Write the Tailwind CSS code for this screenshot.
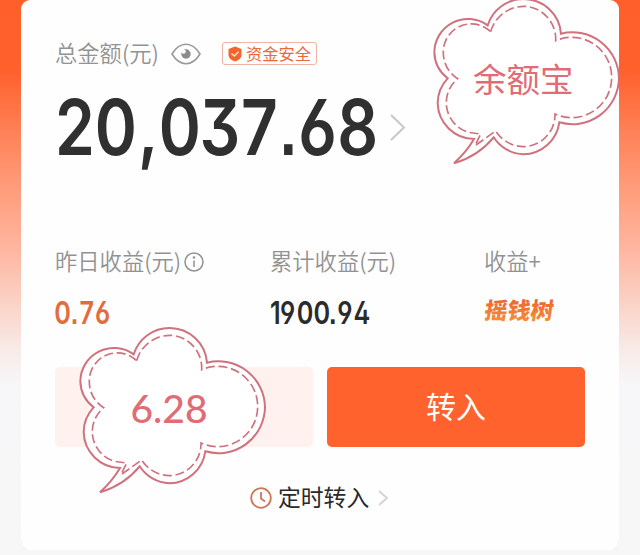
<!DOCTYPE html>
<html lang="zh-CN">
<head>
<meta charset="utf-8">
<title>余额宝</title>
<script src="https://cdn.jsdelivr.net/npm/@tailwindcss/browser@4"></script>
</head>
<body class="w-[640px] h-[555px] overflow-hidden relative bg-[#f7f7f7] font-['Noto_Sans_CJK_SC',sans-serif]">
<svg class="absolute w-0 h-0">
  <linearGradient id="gold" x1="0" y1="0" x2="0" y2="1"><stop offset=".2" stop-color="#ea6534"/><stop offset="1" stop-color="#f59838"/></linearGradient>
  <symbol id="cloud" viewBox="0 -9 600 510">
    <path d="M188 76A113 113 0 0 1 296 -3A113 113 0 0 1 408 101A140 140 0 0 1 582 235A140 140 0 0 1 403 367A111 111 0 0 1 295 463A111 111 0 0 1 206 412Q160 468 87 490Q125 455 147 417A110 110 0 0 1 38 310A110 110 0 0 1 68 235A101 101 0 0 1 28 157A101 101 0 0 1 188 76Z" fill="#fff" stroke="#d0717e" stroke-width="6"/>
    <path d="M197 95A104 104 0 0 1 300 19A98 98 0 0 1 392 122A120 120 0 0 1 560 232A120 120 0 0 1 390 342A96 96 0 0 1 295 440A100 100 0 0 1 212 393L150 437L167 402L130 397A93 93 0 0 1 64 305A93 93 0 0 1 98 236A90 90 0 0 1 55 160A84 84 0 0 1 197 95Z" fill="none" stroke="#d0717e" stroke-width="5" stroke-dasharray="27 11"/>
  </symbol>
</svg>
<div class="w-full h-full px-[21px] pb-[5px] bg-[linear-gradient(to_bottom,#ff5f2b_0px,#ff602c_70px,#ff8056_130px,#ff9b78_185px,#ffb6a0_250px,#fad6cb_310px,#f8ebe8_350px,#f7f6f8_385px,#f7f7f7_555px)]">
  <main class="h-full bg-[#fefefe] rounded-t-[9px] rounded-b-[12px] pl-[34px] pr-[33px] pt-[40px] flex flex-col">
    <div class="flex items-center h-[27px] text-[22.300px] leading-[27px] font-[350] text-[#929292]">
      <span class="w-[116px] whitespace-nowrap relative top-[-1px]">总金额(元)</span>
      <svg class="w-[30px] h-[22px]" viewBox="0 0 30 22" fill="none" stroke="#999" stroke-width="1.6"><path d="M1 11Q7 1.300 15 1.300T29 11Q23 20.700 15 20.700T1 11Z"/><circle cx="15" cy="11" r="4.700" fill="#8b8b8b" stroke="none"/><circle cx="12.600" cy="8.600" r="2.200" fill="#fefefe" stroke="none"/></svg>
      <span class="ml-[21px] w-[95px] h-[23px] border border-[#edb4a4] rounded-[3px] flex items-center pl-[5px] text-[16.300px] text-[#e9693d] font-normal whitespace-nowrap">
        <svg class="w-[14px] h-[16px] mr-[4px] shrink-0" viewBox="0 0 14 16"><path d="M7 .5L13.500 3V9Q13.500 13 7 15.500Q.5 13 .5 9V3Z" fill="#f5642f"/><path d="M3.500 7.500L6.300 10L10.500 5.800" fill="none" stroke="#ffe5ce" stroke-width="1.6"/></svg>资金安全</span>
    </div>
    <div class="flex h-[85px] mt-[19px]">
      <svg class="w-[328px] h-[85px] overflow-visible" viewBox="0 0 328 85"><text class="font-['Inter'] font-semibold text-[77px] [font-feature-settings:'ss01']" fill="#303030" transform="scale(.83 1)" x="0 48 100 125 174 224 271 293 340" y="69">20,037<tspan class="font-['Liberation_Sans'] font-bold text-[72px]">.</tspan>68</text></svg>
      <svg class="w-[18px] h-[28px] mt-[27px] ml-[5px]" viewBox="0 0 18 28" fill="none" stroke="#c8c8c8" stroke-width="2"><path d="M3 2L16 14.500L3 27"/></svg>
    </div>
    <div class="flex mt-[76px] text-[22.300px] leading-[27px] text-[#929292] font-[350] whitespace-nowrap">
      <section class="w-[215px]">
        <div class="flex items-center h-[27px]">昨日收益(元)<svg class="w-[20px] h-[20px] ml-[3px] mt-[3px]" viewBox="0 0 20 20" fill="none" stroke="#929292" stroke-width="1.500"><circle cx="10" cy="10" r="9"/><path d="M10 8.500V15"/><circle cx="10" cy="5.500" r=".6" fill="#929292"/></svg></div>
        <svg class="w-[90px] h-[40px] mt-[19px]" viewBox="0 0 90 40"><text class="font-['Inter'] font-semibold text-[31.500px] [font-feature-settings:'ss01']" fill="#e36c3e" transform="scale(.8 1)" x="-1 20 30.500 50" y="31">0<tspan class="font-['Liberation_Sans'] font-bold">.</tspan>76</text></svg>
      </section>
      <section class="w-[214px]">
        <div class="h-[27px]">累计收益(元)</div>
        <svg class="w-[120px] h-[40px] mt-[19px]" viewBox="0 0 120 40"><text class="font-['Inter'] font-semibold text-[31.500px] [font-feature-settings:'ss01']" fill="#2b2b2b" transform="scale(.8 1)" x="0 12.500 33.500 54.500 74 84 104.500" y="31">1900<tspan class="font-['Liberation_Sans'] font-bold">.</tspan>94</text></svg>
      </section>
      <section>
        <div class="h-[27px]">收益+</div>
        <svg class="w-[78px] h-[34px] mt-[20px] overflow-visible" viewBox="0 0 78 34"><text class="font-black text-[23px]" x="3" y="25" transform="skewX(-8)" fill="url(#gold)">摇钱树</text></svg>
      </section>
    </div>
    <div class="flex gap-[14px] h-[80px] mt-[34px]">
      <div class="w-[258px] h-[80px] rounded-[5px] bg-[#fff1ee]"></div>
      <button class="w-[258px] h-[80px] rounded-[5px] bg-[#ff622d] text-white text-[30px] pb-[4px]">转入</button>
    </div>
    <div class="flex items-center h-[30px] mt-[36px] ml-[195px] text-[22.800px] leading-[30px] text-[#292929]">
      <svg class="w-[22px] h-[22px] mr-[6px]" viewBox="0 0 22 22" fill="none" stroke="#cc7858" stroke-width="1.8"><circle cx="11" cy="11" r="9.800"/><path d="M11 5V11.500L15 14.500"/></svg><span class="relative top-[-1px]">定时转入</span>
      <svg class="w-[12px] h-[18px] ml-[8px]" viewBox="0 0 12 18" fill="none" stroke="#d2d2d2" stroke-width="1.8"><path d="M2 2L10 9L2 16"/></svg>
    </div>
  </main>
</div>
<div class="absolute left-[425px] top-[-3px] w-[200px] h-[170px] text-[#e06c76]">
  <svg class="absolute inset-0 w-full h-full"><use href="#cloud"/></svg>
  <span class="absolute left-[48px] top-[57px] text-[33.500px] leading-[48px] whitespace-nowrap">余额宝</span>
</div>
<div class="absolute left-[70.500px] top-[326px] w-[200px] h-[170px] text-[#e06c76]">
  <svg class="absolute inset-0 w-full h-full"><use href="#cloud"/></svg>
  <span class="absolute left-[60px] top-[58px] text-[39px] leading-[48px] font-['Lato'] font-medium whitespace-nowrap">6.28</span>
</div>
</body>
</html>
